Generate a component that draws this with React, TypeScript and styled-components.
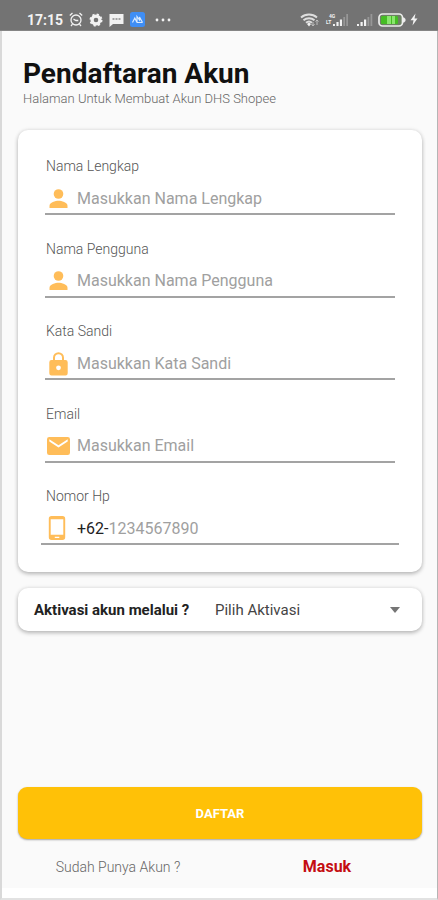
import React from "react";
import styled, { createGlobalStyle } from "styled-components";

const GlobalStyle = createGlobalStyle`
  *, *::before, *::after { box-sizing: border-box; }
  body {
    margin: 0;
    background: #fafafa;
    font-family: Roboto, "Liberation Sans", sans-serif;
  }
  input, select, button { font-family: inherit; }
`;

const Screen = styled.div`
  display: flex;
  flex-direction: column;
  min-height: 100vh;
  background: #fafafa;
  border-left: 2px solid #d9d9d9;
  border-right: 1px solid #b5b5b5;
  border-bottom: 2px solid #e2e2e2;
`;

const StatusBar = styled.header`
  display: flex;
  align-items: center;
  justify-content: space-between;
  height: 31px;
  margin: 0 -1px 0 -2px;
  padding: 9px 20px 0 27px;
  background: #737373;
  border-bottom: 1px solid #858585;
  color: #f2f2f2;
`;

const StatusGroup = styled.div<{ $gap: number }>`
  display: flex;
  align-items: center;
  gap: ${(p) => p.$gap}px;

  svg { display: block; }
`;

const Clock = styled.time`
  font-size: 14px;
  line-height: 16px;
  font-weight: 700;
`;

const Content = styled.main`
  display: flex;
  flex: 1;
  flex-direction: column;
  padding: 26px 15px 0 16px;
`;

const Heading = styled.div`
  padding-left: 5px;
`;

const Title = styled.h1`
  margin: 0;
  color: #111;
  font-size: 28px;
  line-height: 34px;
  font-weight: 700;
`;

const Subtitle = styled.p`
  margin: 0;
  color: #666;
  font-size: 13px;
  line-height: 16px;
  font-weight: 300;
`;

const Form = styled.form`
  display: flex;
  flex: 1;
  flex-direction: column;
`;

const Card = styled.section`
  background: #fff;
  border-radius: 10px;
  box-shadow: 0 2px 4px rgba(0, 0, 0, 0.24), 0 0 4px rgba(0, 0, 0, 0.1);
`;

const FieldsCard = styled(Card)`
  display: flex;
  flex-direction: column;
  justify-content: space-between;
  min-height: 442px;
  margin-top: 23px;
  padding: 26px 27px 27px;
`;

const Field = styled.div`
  display: flex;
  flex-direction: column;
`;

const FieldLabel = styled.label`
  padding-left: 1px;
  color: #555;
  font-size: 14px;
  line-height: 20px;
  font-weight: 300;
`;

const Control = styled.div<{ $wide?: boolean }>`
  display: flex;
  align-items: center;
  height: 39px;
  margin: 0 ${(p) => (p.$wide ? -4 : 0)}px;
  padding: 8px ${(p) => (p.$wide ? 4 : 0)}px 0;
  border-bottom: 2px solid #a3a3a3;

  svg {
    flex: none;
    width: 28px;
    height: 28px;
    margin-right: 4px;
    color: #ffbd59;
  }
`;

const Prefix = styled.span`
  color: #222;
  font-size: 16px;
  line-height: 24px;
`;

const TextInput = styled.input`
  flex: 1;
  min-width: 0;
  padding: 0;
  border: 0;
  outline: 0;
  background: transparent;
  color: #222;
  font-size: 16px;
  line-height: 24px;

  &::placeholder { color: #a0a0a0; opacity: 1; }
`;

const ActivationCard = styled(Card)`
  display: flex;
  align-items: center;
  min-height: 43px;
  margin-top: 16px;
  padding: 0 21px 0 16px;
`;

const ActivationLabel = styled.label`
  flex: 0 0 181px;
  color: #222;
  font-size: 15px;
  line-height: 20px;
  font-weight: 700;
`;

const SelectBox = styled.div`
  display: grid;
  flex: 1;
  align-items: center;

  > * { grid-area: 1 / 1; }
  svg { justify-self: end; pointer-events: none; }
`;

const Select = styled.select`
  width: 100%;
  height: 32px;
  padding: 0;
  border: 0;
  outline: 0;
  appearance: none;
  background: transparent;
  color: #444;
  font-size: 15px;
`;

const SubmitButton = styled.button`
  height: 52px;
  margin-top: auto;
  border: 0;
  border-radius: 9px;
  background: #ffc107;
  box-shadow: 0 1px 2px rgba(0, 0, 0, 0.35);
  color: #fff;
  font-size: 13px;
  font-weight: 700;
  cursor: pointer;
`;

const Footer = styled.footer`
  display: grid;
  grid-template-columns: 1fr 1fr;
  align-items: center;
  height: 49px;
  padding: 7px 4px 0 0;
  text-align: center;
`;

const Question = styled.span`
  color: #666;
  font-size: 14px;
  line-height: 20px;
  font-weight: 300;
`;

const LoginLink = styled.a`
  padding-left: 18px;
  color: #c40d12;
  font-size: 16px;
  line-height: 20px;
  font-weight: 700;
  text-decoration: none;
`;

const BottomStrip = styled.div`
  height: 10px;
  background: #fff;
`;

const PersonIcon = () => (
  <svg viewBox="0 0 28 28" fill="currentColor" aria-hidden="true">
    <circle cx="13.5" cy="9" r="4.8" />
    <path d="M4.5 23v-2.3c0-3.3 6-4.9 9-4.9s9 1.600 9 4.900V23z" />
  </svg>
);

const LockIcon = () => (
  <svg viewBox="0 0 28 28" fill="currentColor" aria-hidden="true">
    <path
      fillRule="evenodd"
      d="M20.500 10H19V7.700a5.500 5.500 0 0 0-11 0V10H6.500a2.200 2.200 0 0 0-2.200 2.200v11.100a2.200 2.200 0 0 0 2.200 2.200h14a2.200 2.200 0 0 0 2.200-2.200V12.200A2.200 2.200 0 0 0 20.500 10zM10 10V7.700a3.500 3.500 0 0 1 7 0V10zm3.500 10.200a2.400 2.400 0 1 1 0-4.800 2.400 2.400 0 0 1 0 4.800z"
    />
  </svg>
);

const MailIcon = () => (
  <svg viewBox="0 0 28 28" fill="currentColor" aria-hidden="true">
    <path d="M4.300 5h18.400A2.300 2.300 0 0 1 25 7.300v13.400a2.300 2.300 0 0 1-2.300 2.300H4.300A2.300 2.300 0 0 1 2 20.700V7.300A2.300 2.300 0 0 1 4.300 5zm18.400 4.500V7.300L13.500 13.300 4.300 7.300v2.200l9.200 6z" fillRule="evenodd" />
  </svg>
);

const PhoneIcon = () => (
  <svg viewBox="0 0 28 28" fill="currentColor" aria-hidden="true">
    <path
      fillRule="evenodd"
      d="M6.500 1h11a2.700 2.700 0 0 1 2.700 2.700v18.600a2.700 2.700 0 0 1-2.700 2.700h-11a2.700 2.700 0 0 1-2.700-2.700V3.700A2.700 2.700 0 0 1 6.500 1zM5.700 4.200v15.600h12.600V4.200zM9.800 21.800v1.200h4.500v-1.200z"
    />
  </svg>
);

const AlarmIcon = () => (
  <svg width="14" height="15" viewBox="0 0 14 15" fill="none" stroke="currentColor" strokeWidth="1.300" aria-hidden="true">
    <circle cx="7" cy="8" r="5" />
    <path d="M.8 3.500 3.500 1M13.200 3.500 10.500 1M4.500 7.200 7 8.500h2.300M3.500 12.200 2 14M10.500 12.200 12 14" />
  </svg>
);

const GearIcon = () => (
  <svg width="14" height="14" viewBox="0 0 14 14" aria-hidden="true">
    <circle cx="7" cy="7" r="3.900" fill="none" stroke="currentColor" strokeWidth="3.200" />
    <circle cx="7" cy="7" r="5.600" fill="none" stroke="currentColor" strokeWidth="1.800" strokeDasharray="2.200 2.198" />
  </svg>
);

const MessageIcon = () => (
  <svg width="15" height="14" viewBox="0 0 15 14" aria-hidden="true">
    <path d="M1 1h13.500v10H4l-3.500 3V1z" fill="currentColor" />
    <path d="M3.500 6h8" stroke="#8b8b8b" strokeWidth="1.400" strokeDasharray="2 1" />
  </svg>
);

const AppIcon = () => (
  <svg width="15" height="15" viewBox="0 0 15 15" fill="none" aria-hidden="true">
    <rect width="15" height="15" rx="2.500" fill="#3f8ef5" />
    <path d="m2.500 10.500 2.300-4.500 2.200 4.500V4.500L9.500 8v-3l3 5.500M7 10.500h5.500" stroke="#d9eaff" strokeWidth="1.200" />
  </svg>
);

const MoreIcon = () => (
  <svg width="16" height="4" viewBox="0 0 16 4" fill="currentColor" aria-hidden="true">
    <circle cx="2" cy="2" r="1.400" />
    <circle cx="8" cy="2" r="1.400" />
    <circle cx="14" cy="2" r="1.400" />
  </svg>
);

const WifiIcon = () => (
  <svg width="19" height="14" viewBox="0 0 19 14" fill="none" aria-hidden="true">
    <path d="M1 4.500a12 12 0 0 1 16 0M3.500 7.200a8.500 8.500 0 0 1 11 0M6 9.800a4.500 4.500 0 0 1 6 0" stroke="#dedede" strokeWidth="1.900" />
    <path d="m7 11 2-1.500 2 1.500-2 2.500z" fill="currentColor" />
    <path d="M13 13V9m-1.500 2L13 13l1.500-2M17 7v5m-1.500-3.500L17 7l1.500 1.500" stroke="#bdbdbd" />
  </svg>
);

const NetworkLabel = styled.span`
  display: flex;
  flex-direction: column;
  align-self: flex-start;
  font-size: 5px;
  line-height: 6px;
  font-weight: 700;

  span:first-child { padding-left: 3px; }
`;

const NetworkSignal = styled.span`
  display: flex;
  align-items: flex-end;
  width: 23px;

  svg { margin-left: -3px; }
`;

const SignalIcon = () => (
  <svg width="17" height="13" viewBox="0 0 17 13" aria-hidden="true">
    <path d="M1 13v-2h2v2zM4.500 13V9h2.200v4zM8 13V6.500h2.200V13z" fill="#f2f2f2" />
    <path d="M11.500 13V4h1.800v9zM14.500 13V1h1.800v12z" fill="#979797" />
  </svg>
);

const BatteryIcon = () => (
  <svg width="28" height="14" viewBox="0 0 28 14" aria-hidden="true">
    <rect x="1" y="1" width="23.500" height="12" rx="3.500" fill="#6e8065" stroke="#ededed" strokeWidth="1.700" />
    <rect x="3" y="3" width="17" height="8" rx="1.500" fill="#45bd24" />
    <path d="M9 3h4v8H9zm5 0h3v8h-3z" fill="#8be66f" />
    <path d="M25 4.500h1l1.500 1.500v2L26 9.500h-1z" fill="#ededed" />
  </svg>
);

const BoltIcon = () => (
  <svg width="8" height="13" viewBox="0 0 8 13" fill="currentColor" aria-hidden="true">
    <path d="M5.500.5.5 7.200h3L2.500 12.500l5-7h-3z" />
  </svg>
);

const CaretIcon = () => (
  <svg width="12" height="6" viewBox="0 0 12 6" fill="#757575" aria-hidden="true">
    <path d="M1 0h10L6 6z" />
  </svg>
);

const fields = [
  { id: "nama", label: "Nama Lengkap", hint: "Masukkan Nama Lengkap", type: "text", Icon: PersonIcon },
  { id: "pengguna", label: "Nama Pengguna", hint: "Masukkan Nama Pengguna", type: "text", Icon: PersonIcon },
  { id: "sandi", label: "Kata Sandi", hint: "Masukkan Kata Sandi", type: "password", Icon: LockIcon },
  { id: "email", label: "Email", hint: "Masukkan Email", type: "email", Icon: MailIcon },
  { id: "hp", label: "Nomor Hp", hint: "1234567890", type: "tel", Icon: PhoneIcon, prefix: "+62-" },
];

export default function App() {
  return (
    <Screen>
      <GlobalStyle />
      <StatusBar>
        <StatusGroup $gap={10}>
          <StatusGroup $gap={6}>
            <Clock>17:15</Clock>
            <AlarmIcon />
            <GearIcon />
            <MessageIcon />
            <AppIcon />
          </StatusGroup>
          <MoreIcon />
        </StatusGroup>
        <StatusGroup $gap={4}>
          <StatusGroup $gap={7}>
            <WifiIcon />
            <NetworkSignal>
              <NetworkLabel>
                <span>4G</span>
                <span>LT</span>
              </NetworkLabel>
              <SignalIcon />
            </NetworkSignal>
            <StatusGroup $gap={5}>
              <SignalIcon />
              <BatteryIcon />
            </StatusGroup>
          </StatusGroup>
          <BoltIcon />
        </StatusGroup>
      </StatusBar>
      <Content>
        <Heading>
          <Title>Pendaftaran Akun</Title>
          <Subtitle>Halaman Untuk Membuat Akun DHS Shopee</Subtitle>
        </Heading>
        <Form onSubmit={(e) => e.preventDefault()}>
          <FieldsCard>
            {fields.map(({ id, label, hint, type, Icon, prefix }) => (
              <Field key={id}>
                <FieldLabel htmlFor={id}>{label}</FieldLabel>
                <Control $wide={Boolean(prefix)}>
                  <Icon />
                  {prefix && <Prefix>{prefix}</Prefix>}
                  <TextInput id={id} type={type} placeholder={hint} />
                </Control>
              </Field>
            ))}
          </FieldsCard>
          <ActivationCard>
            <ActivationLabel htmlFor="aktivasi">Aktivasi akun melalui ?</ActivationLabel>
            <SelectBox>
              <Select id="aktivasi" defaultValue="">
                <option value="">Pilih Aktivasi</option>
                <option value="email">Email</option>
              </Select>
              <CaretIcon />
            </SelectBox>
          </ActivationCard>
          <SubmitButton type="submit">DAFTAR</SubmitButton>
        </Form>
        <Footer>
          <Question>Sudah Punya Akun ?</Question>
          <LoginLink href="#masuk">Masuk</LoginLink>
        </Footer>
      </Content>
      <BottomStrip />
    </Screen>
  );
}
